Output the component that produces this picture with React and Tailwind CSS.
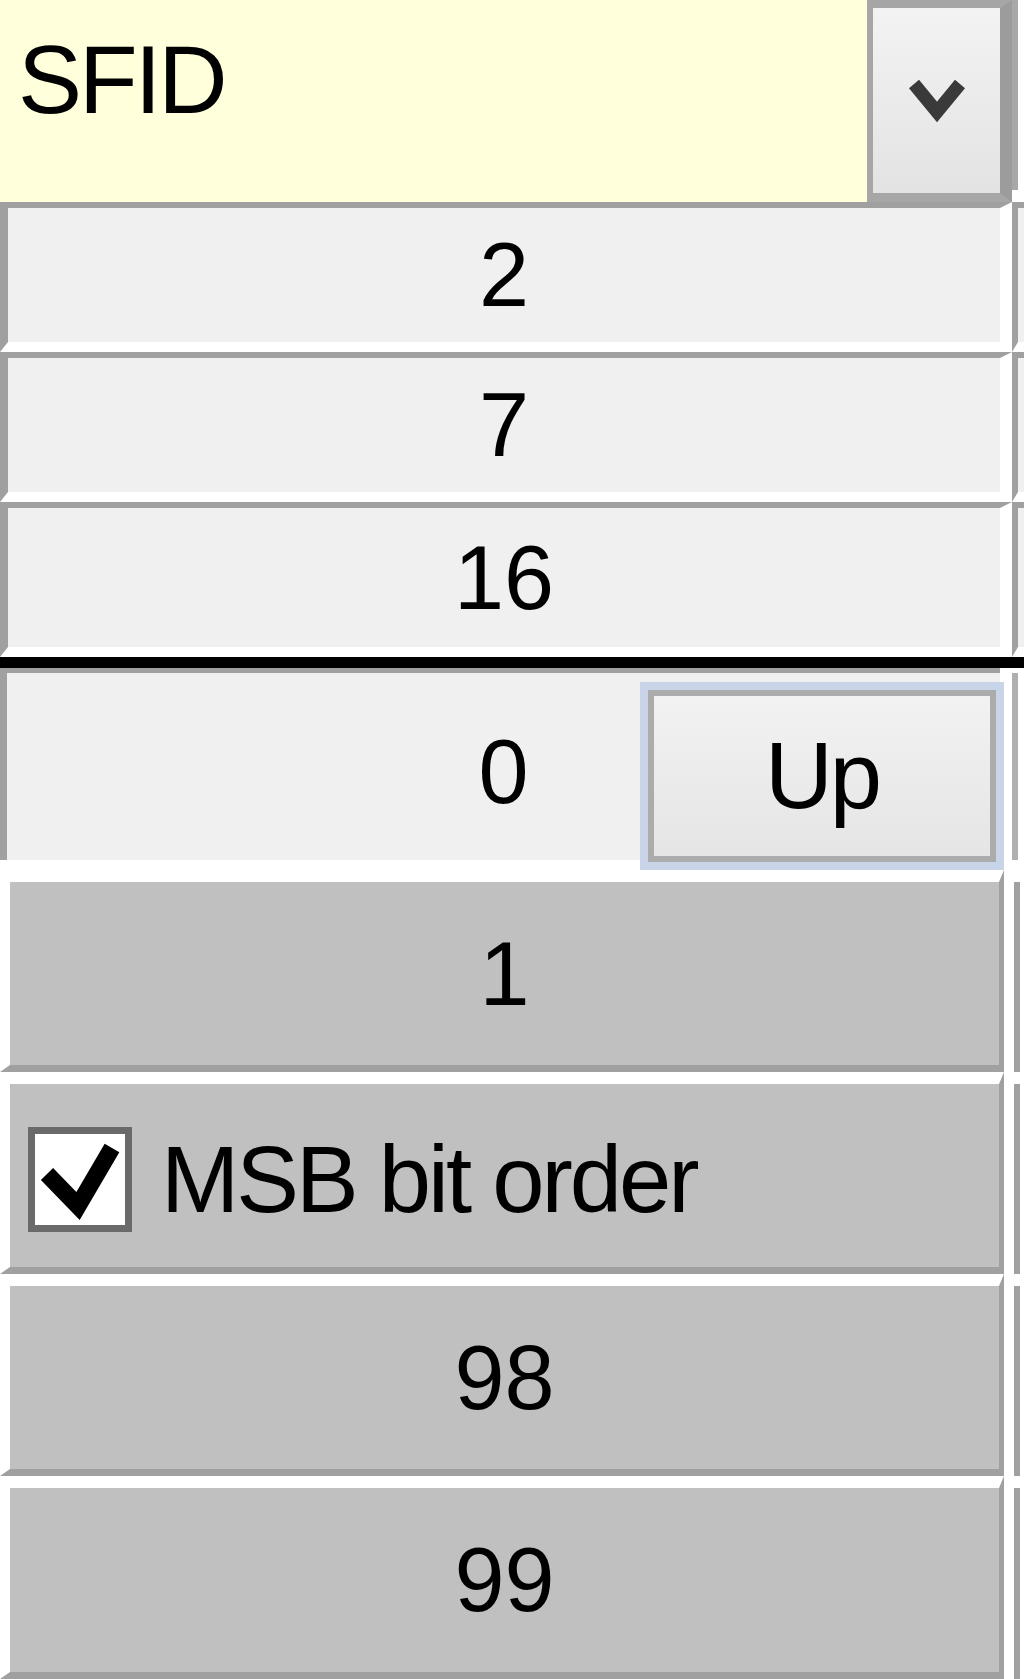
import React from 'react';

// Scaled-up Win32 property column: combo box, sunken value cells, spin row, raised gray cells
const FONT = "font-['Liberation_Sans',Arial,sans-serif]";

function LightRow({ h, children }) {
    return (
        <div className={`flex ${h}`}>
            <div className="w-[1012px] border-t-[6px] border-l-[8px] border-[#a0a0a0] border-b-[10px] border-b-white border-r-[12px] border-r-white bg-[#f0f0f0] flex items-center justify-center text-[90px] leading-none text-black">
                {children}
            </div>
            <div className="flex-1 border-t-[6px] border-l-[6px] border-[#a0a0a0] border-b-[10px] border-b-white bg-[#f0f0f0]" />
        </div>
    );
}

function GrayRow({ h = 'h-[202px]', children, className = 'justify-center' }) {
    return (
        <div className={`flex ${h}`}>
            <div className={`w-[1004px] border-t-[12px] border-t-white border-l-[10px] border-l-white border-b-[7px] border-b-[#a0a0a0] border-r-[5px] border-r-[#a0a0a0] bg-[#c0c0c0] flex items-center text-[90px] leading-none text-black ${className}`}>
                {children}
            </div>
            <div className="flex-1 bg-white pl-[10px] pt-[12px]">
                <div className="h-full w-[6px] bg-[#a0a0a0]" />
            </div>
        </div>
    );
}

export default function App() {
    return (
        <div className={`w-[1024px] h-[1679px] bg-white overflow-hidden ${FONT}`}>
            {/* combo box */}
            <div className="flex h-[202px]">
                <div className="w-[867px] bg-[#ffffdc] pl-[18px] pt-[32px] text-[96px] leading-none tracking-[-3px] text-black">
                    SFID
                </div>
                <div className="w-[145px] border-t-[8px] border-l-[6px] border-b-[9px] border-r-[12px] border-[#a6a6a6] border-r-[#9c9c9c] bg-gradient-to-b from-[#f3f3f3] to-[#e3e3e3] flex items-center justify-center">
                    <svg width="58" height="46" viewBox="0 0 58 46">
                        <polyline points="6,6 29,34 52,6" fill="none" stroke="#3a3a3a" strokeWidth="13" strokeLinejoin="miter" />
                    </svg>
                </div>
                <div className="flex-1 bg-white pb-[12px]">
                    <div className="h-full w-[6px] bg-[#a8a8a8]" />
                </div>
            </div>

            <LightRow h="h-[150px]">2</LightRow>
            <LightRow h="h-[150px]">7</LightRow>
            <LightRow h="h-[155px]">16</LightRow>

            <div className="h-[11px] bg-black" />

            {/* value with spin button */}
            <div className="flex h-[202px]">
                <div className="w-[1012px] grid grid-cols-1 grid-rows-1 bg-white">
                    <div className="col-start-1 row-start-1 mr-[12px] mb-[10px] border-t-[5px] border-l-[7px] border-[#a0a0a0] bg-[#f0f0f0] flex items-center justify-center pt-[11px] text-[90px] leading-none text-black">
                        0
                    </div>
                    <div className="col-start-1 row-start-1 self-end justify-self-end mr-[8px] w-[364px] h-[188px] border-[8px] border-[#c9d4e9]">
                        <div className="h-full border-[6px] border-[#acacac] bg-gradient-to-b from-[#f2f2f2] to-[#e5e5e5] flex items-center justify-center text-[94px] leading-none tracking-[-3px] text-black">
                            Up
                        </div>
                    </div>
                </div>
                <div className="flex-1 bg-white pt-[5px] pb-[10px]">
                    <div className="h-full w-[6px] bg-[#b0b0b0]" />
                </div>
            </div>

            <GrayRow>1</GrayRow>
            <GrayRow className="justify-start pl-[18px] pt-[8px]">
                <div className="w-[104px] h-[105px] border-[7px] border-[#6a6a6a] bg-white flex items-center justify-center">
                    <svg width="90" height="91" viewBox="0 0 90 91">
                        <polyline points="12,40 43,72 77,14" fill="none" stroke="#000" strokeWidth="17" strokeLinejoin="miter" />
                    </svg>
                </div>
                <span className="ml-[29px] text-[94px] tracking-[-3px]">MSB bit order</span>
            </GrayRow>
            <GrayRow>98</GrayRow>
            <GrayRow h="h-[203px]">99</GrayRow>
        </div>
    );
}
